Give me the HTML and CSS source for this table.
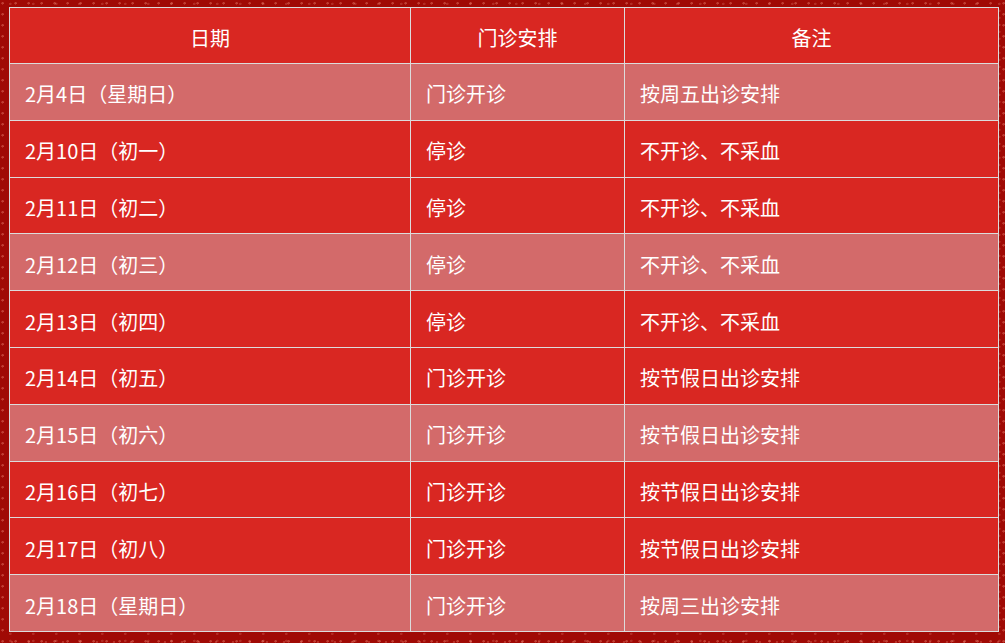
FILE: index.html
```html
<!DOCTYPE html>
<html lang="zh-CN">
<head>
<meta charset="utf-8">
<link rel="stylesheet" href="styles.css">
</head>
<body>
<div class="wrap">
<table class="sched">
<thead>
<tr><th class="c1">日期</th><th class="c2">门诊安排</th><th class="c3">备注</th></tr>
</thead>
<tbody>
<tr class="light"><td>2月4日（星期日）</td><td>门诊开诊</td><td>按周五出诊安排</td></tr>
<tr><td>2月10日（初一）</td><td>停诊</td><td>不开诊、不采血</td></tr>
<tr><td>2月11日（初二）</td><td>停诊</td><td>不开诊、不采血</td></tr>
<tr class="light"><td>2月12日（初三）</td><td>停诊</td><td>不开诊、不采血</td></tr>
<tr><td>2月13日（初四）</td><td>停诊</td><td>不开诊、不采血</td></tr>
<tr><td>2月14日（初五）</td><td>门诊开诊</td><td>按节假日出诊安排</td></tr>
<tr class="light"><td>2月15日（初六）</td><td>门诊开诊</td><td>按节假日出诊安排</td></tr>
<tr><td>2月16日（初七）</td><td>门诊开诊</td><td>按节假日出诊安排</td></tr>
<tr><td>2月17日（初八）</td><td>门诊开诊</td><td>按节假日出诊安排</td></tr>
<tr class="light"><td>2月18日（星期日）</td><td>门诊开诊</td><td>按周三出诊安排</td></tr>
</tbody>
</table>
</div>
</body>
</html>
```
FILE: styles.css
```css
html, body {
  margin: 0;
  padding: 0;
  height: 100%;
}
body {
  background-color: #a00a05;
  background-image:
    radial-gradient(circle at 20% 30%, rgba(255,160,140,0.35) 0 1px, transparent 1.5px),
    radial-gradient(circle at 70% 80%, rgba(255,160,140,0.25) 0 1px, transparent 1.5px),
    radial-gradient(circle at 45% 55%, rgba(255,180,160,0.2) 0 1px, transparent 1.5px);
  background-size: 13px 11px, 17px 19px, 23px 7px;
  font-family: "Microsoft YaHei", "Noto Sans CJK SC", "Noto Sans", sans-serif;
  overflow: hidden;
}
.wrap {
  padding: 7px 0 0 9px;
}
.sched {
  border-collapse: collapse;
  width: 986px;
  height: 625px;
  table-layout: fixed;
  color: #ffffff;
  font-size: 20px;
}
.sched th, .sched td {
  border: 1px solid #dcdcdc;
  height: 50px;
  padding: 5px 0 0 15px;
  background: #d92722;
  text-align: left;
  font-weight: normal;
  line-height: 24px;
  white-space: nowrap;
}
.sched th {
  text-align: center;
  padding: 5px 0 0 0;
}
.sched .light td {
  background: #d36a6a;
}
.c1 { width: 400px; }
.c2 { width: 213px; }
.c3 { width: 373px; }
```
